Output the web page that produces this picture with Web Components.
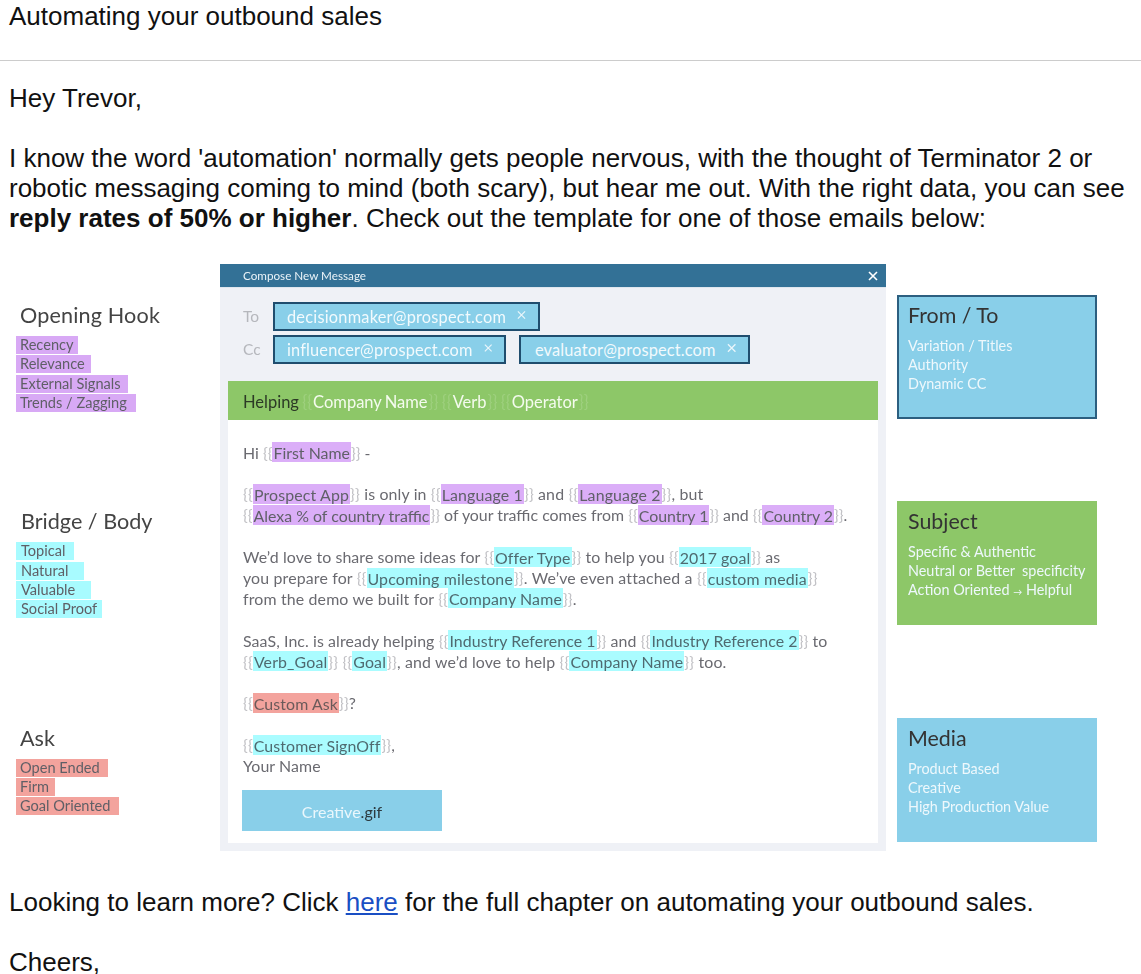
<!DOCTYPE html>
<html lang="en">
<head>
<meta charset="utf-8">
<title>Automating your outbound sales</title>
<style>
html,body{margin:0;padding:0;background:#fff;overflow:hidden}
body{font-family:"Liberation Sans",Arial,sans-serif;color:#111}
</style>
</head>
<body>
<template id="t-mail">
<style>
:host{display:block;width:1141px;height:974px;overflow:hidden;font:26px/30px "Liberation Sans",Arial,sans-serif;color:#111}
header{padding:1px 9px 0;border-bottom:1px solid #ccc;box-sizing:border-box;height:61px}
main{padding:22px 0 0 9px}
p{margin:0 0 30px}
b{font-weight:700}
a{color:#1a4fc4;text-decoration:underline}
.art{margin:31px 0 36px -9px}
</style>
<header><slot name="subject"></slot></header>
<main>
<p>Hey Trevor,</p>
<p style="white-space:nowrap">I know the word 'automation' normally gets people nervous, with the thought of Terminator 2 or<br>robotic messaging coming to mind (both scary), but hear me out. With the right data, you can see<br><b>reply rates of 50% or higher</b>. Check out the template for one of those emails below:</p>
<div class="art"><slot></slot></div>
<p>Looking to learn more? Click <a href="#">here</a> for the full chapter on automating your outbound sales.</p>
<p>Cheers,</p>
</main>
</template>

<template id="t-graphic">
<style>
:host{display:grid;grid-template-columns:220px 666px 255px;height:587px;font-family:Lato,"Noto Sans",sans-serif;filter:blur(.35px)}
.col{display:flex;flex-direction:column}
.right{padding-left:11px;box-sizing:border-box}
</style>
<div class="col"><slot name="left"></slot></div>
<div><slot name="center"></slot></div>
<div class="col right"><slot name="right"></slot></div>
</template>

<template id="t-group">
<style>
:host{display:block;padding-left:16px}
h3{margin:0 0 8.8px 4px;font:400 21.6px/24px Lato,sans-serif;color:#444}
</style>
<h3><slot name="title"></slot></h3>
<slot></slot>
</template>

<template id="t-tag">
<style>
:host{display:block;height:18px;margin-bottom:1.4px;box-sizing:border-box;padding-left:4px;font:14.6px/18px Lato,sans-serif;color:#5f5f66;white-space:nowrap}
:host([kind=p]){background:#d8a9f5}
:host([kind=c]){background:#a8fbff;padding-left:5px}
:host([kind=r]){background:#f3a39d}
</style>
<slot></slot>
</template>

<template id="t-card">
<style>
:host{display:block;width:200px;height:124px;box-sizing:border-box;padding:8px 0 0 11px;color:#eef8fc;font:14.4px/19.4px Lato,sans-serif;white-space:nowrap}
:host([tone=blue]){background:#89cfe9}
:host([tone=green]){background:#8dc768}
:host([edge]){border:2px solid #2c5f80;padding:6px 0 0 9px}
h3{margin:0 0 8.6px;font:400 21.4px/24px Lato,sans-serif;color:#333}
</style>
<h3><slot name="title"></slot></h3>
<slot></slot>
</template>

<template id="t-chip">
<style>
:host{display:inline-flex;align-items:center;justify-content:space-between;height:29px;box-sizing:border-box;border:2px solid #1f4d6e;background:#89cfe9;color:#f2fafd;font:16.35px/25px Lato,sans-serif;padding:0 12px;letter-spacing:.15px;white-space:nowrap}
svg{width:10px;height:10px;margin:-3px 0 0 11px;stroke:#eaf6fb;stroke-width:1.4;fill:none}
</style>
<slot></slot>
<svg viewBox="0 0 10 10"><path d="M1 1L9 9M9 1L1 9"/></svg>
</template>

<template id="t-var"><style>
:host{display:inline;white-space:nowrap}
span{color:#c2c2c6}
mark{color:#606068;padding:.5px 1px}
:host([kind=p]) mark{background:#dbaef8}
:host([kind=c]) mark{background:#aafcff;color:#4f6a70}
:host([kind=r]) mark{background:#f3a39d;color:#6b5a5a}
:host([kind=w]) mark{background:none;color:#f4fbee;padding:0 1px}
:host([kind=w]) span{color:#9ed07e}
</style><span>{{</span><mark><slot></slot></mark><span>}}</span></template>

<template id="t-compose">
<style>
:host{display:block;height:587px;background:#eff1f6;font-family:Lato,sans-serif}
.bar{height:23px;background:#337196;color:#eaf3f8;font:11.7px/23px Lato,sans-serif;padding:0 8px 0 23px;display:flex;justify-content:space-between;align-items:center;border-bottom:1px solid #dfe6ee}
.bar svg{width:10px;height:10px;stroke:#fff;stroke-width:1.6;fill:none}
.rcpt{padding:14px 0 0 23px;height:93px;box-sizing:border-box}
.row{display:flex;align-items:center;gap:13px;margin-bottom:4px}
.row i{font:normal 15.5px/29px Lato,sans-serif;color:#b5b7bc;width:17px}
.sheet{margin:0 8px;height:462px;background:#fff;display:flex;flex-direction:column}
.subj{height:39px;background:#8dc768;color:#2c3a26;font:16.5px/43px Lato,sans-serif;padding-left:15px;white-space:nowrap;word-spacing:-1px}
.text{height:356px;box-sizing:border-box;padding:22.6px 0 0 15px;font:15.9px/20.9px Lato,sans-serif;color:#6a6a70;white-space:nowrap;letter-spacing:.15px}
.text ::slotted(p){margin:0 0 20.9px}
.cta{margin:14px 0 0 14px;width:200px;height:41px;background:#89cfe9;color:#eaf7fc;font:16px/44px Lato,sans-serif;text-align:center}
</style>
<div class="bar"><span>Compose New Message</span><svg viewBox="0 0 10 10"><path d="M1 1L9 9M9 1L1 9"/></svg></div>
<div class="rcpt">
<div class="row"><i>To</i><slot name="to"></slot></div>
<div class="row"><i>Cc</i><slot name="cc"></slot></div>
</div>
<div class="sheet">
<div class="subj"><slot name="subj"></slot></div>
<div class="text"><slot></slot></div>
<div class="cta"><slot name="cta"></slot></div>
</div>
</template>

<mail-view>
<span slot="subject">Automating your outbound sales</span>
<sales-graphic>
<label-group slot="left" style="margin-top:39px"><span slot="title" style="letter-spacing:.15px">Opening Hook</span>
<hl-tag kind="p" style="width:62px">Recency</hl-tag><hl-tag kind="p" style="width:75px">Relevance</hl-tag><hl-tag kind="p" style="width:112px">External Signals</hl-tag><hl-tag kind="p" style="width:120px">Trends / Zagging</hl-tag>
</label-group>
<label-group slot="left" style="margin-top:96px"><span slot="title" style="margin-left:1px">Bridge / Body</span>
<hl-tag kind="c" style="width:58px">Topical</hl-tag><hl-tag kind="c" style="width:68px">Natural</hl-tag><hl-tag kind="c" style="width:75px">Valuable</hl-tag><hl-tag kind="c" style="width:86px">Social Proof</hl-tag>
</label-group>
<label-group slot="left" style="margin-top:106px"><span slot="title">Ask</span>
<hl-tag kind="r" style="width:92px">Open Ended</hl-tag><hl-tag kind="r" style="width:39px">Firm</hl-tag><hl-tag kind="r" style="width:103px">Goal Oriented</hl-tag>
</label-group>

<compose-window slot="center">
<to-chip slot="to" style="width:267px;letter-spacing:.22px">decisionmaker@prospect.com</to-chip>
<to-chip slot="cc" style="width:233px">influencer@prospect.com</to-chip>
<to-chip slot="cc" style="width:231px;padding-left:14px">evaluator@prospect.com</to-chip>
<span slot="subj">Helping <tpl-var kind="w">Company Name</tpl-var> <tpl-var kind="w">Verb</tpl-var> <tpl-var kind="w">Operator</tpl-var></span>
<p style="letter-spacing:0">Hi <tpl-var kind="p">First Name</tpl-var> -</p>
<p><tpl-var kind="p">Prospect App</tpl-var> is only in <tpl-var kind="p">Language 1</tpl-var> and <tpl-var kind="p">Language 2</tpl-var>, but<br><span style="letter-spacing:0"><tpl-var kind="p">Alexa % of country traffic</tpl-var> of your traffic comes from <tpl-var kind="p">Country 1</tpl-var> and <tpl-var kind="p">Country 2</tpl-var>.</span></p>
<p><span style="letter-spacing:.1px">We’d love to share some ideas for <tpl-var kind="c">Offer Type</tpl-var> to help you <tpl-var kind="c">2017 goal</tpl-var> as</span><br>you prepare for <tpl-var kind="c">Upcoming milestone</tpl-var>. We’ve even attached a <tpl-var kind="c">custom media</tpl-var><br>from the demo we built for <tpl-var kind="c">Company Name</tpl-var>.</p>
<p><span style="letter-spacing:.09px">SaaS, Inc. is already helping <tpl-var kind="c">Industry Reference 1</tpl-var> and <tpl-var kind="c">Industry Reference 2</tpl-var> to</span><br><tpl-var kind="c">Verb_Goal</tpl-var> <tpl-var kind="c">Goal</tpl-var>, and we’d love to help <tpl-var kind="c">Company Name</tpl-var> too.</p>
<p style="letter-spacing:.1px"><tpl-var kind="r">Custom Ask</tpl-var>?</p>
<p style="margin:0;letter-spacing:.1px"><tpl-var kind="c">Customer SignOff</tpl-var>,<br>Your Name</p>
<span slot="cta">Creative<span style="color:#2c3a3f">.gif</span></span>
</compose-window>

<side-card slot="right" tone="blue" edge style="margin-top:31px"><span slot="title">From / To</span>Variation / Titles<br>Authority<br>Dynamic CC</side-card>
<side-card slot="right" tone="green" style="margin-top:82px"><span slot="title">Subject</span>Specific &amp; Authentic<br>Neutral or Better&nbsp; specificity<br>Action Oriented <span style="font-size:9px">→</span> Helpful</side-card>
<side-card slot="right" tone="blue" style="margin-top:93px"><span slot="title">Media</span>Product Based<br>Creative<br>High Production Value</side-card>
</sales-graphic>
</mail-view>

<script>
const reg=(name,id)=>customElements.define(name,class extends HTMLElement{
  constructor(){super();this.attachShadow({mode:'open'}).appendChild(document.getElementById(id).content.cloneNode(true));}
});
reg('mail-view','t-mail');
reg('sales-graphic','t-graphic');
reg('label-group','t-group');
reg('hl-tag','t-tag');
reg('side-card','t-card');
reg('to-chip','t-chip');
reg('tpl-var','t-var');
reg('compose-window','t-compose');
</script>
</body>
</html>
